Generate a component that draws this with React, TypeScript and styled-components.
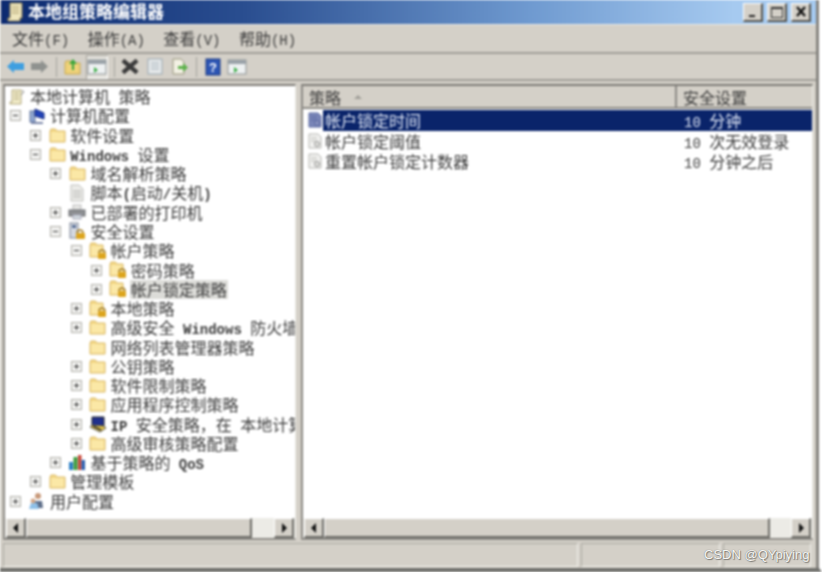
import React from 'react';
import styled, { createGlobalStyle } from 'styled-components';

const Global = createGlobalStyle`
  html, body { margin: 0; padding: 0; background: #fff; overflow: hidden; }
  #root { width: 822px; height: 572px; }
`;

const CJK = `"Noto Sans CJK SC", "Liberation Sans", sans-serif`;

const Page = styled.div`width: 822px; height: 572px; position: relative; overflow: hidden;`;
const Frame = styled.div`
  width: 822px; height: 572px; display: flex; flex-direction: column; box-sizing: border-box;
  background: #d4d0c8; border-right: 3px solid #fff; border-bottom: 4px solid #6f6f6b;
  font-family: ${CJK}; color: #3c3c3c; font-size: 16px; overflow: hidden;
  filter: blur(0.8px);
`;
const Inner = styled.div`
  flex: 1; min-height: 0; display: flex; flex-direction: column; border-right: 3px solid #85837e;
`;
const TitleBar = styled.div`
  height: 24px; flex: none; display: flex; align-items: center; padding: 0 5px;
  margin-left: 1px; gap: 4px;
  background: linear-gradient(90deg, #0c2a70 0%, #2a4e90 30%, #6f9ad0 65%, #a6caf0 90%);
`;
const TitleText = styled.div`
  flex: 1; color: #fff; font-size: 17px; font-weight: 700; line-height: 22px; padding-bottom: 2px;
`;
const WinButtons = styled.div`display: flex; gap: 4px;`;
const WinButton = styled.div`
  width: 20px; height: 19px; display: flex; align-items: center; justify-content: center;
  background: #d4d0c8; border-right: 2px solid #55544f; border-bottom: 2px solid #55544f;
  border-left: 1px solid #fff; border-top: 1px solid #fff; box-sizing: border-box;
`;
const MenuBar = styled.div`
  height: 30px; flex: none; display: flex; align-items: center; gap: 18.4px; padding: 2px 0 0 12px;
  box-sizing: border-box; border-bottom: 2px solid #a09e98; border-top: 1px solid #ecebe6;
`;
const MenuItem = styled.div`font-size: 16px; line-height: 24px; white-space: nowrap;`;
const Latin = styled.span<{ $light?: boolean }>`
  font-family: "Liberation Mono", monospace; font-size: 14px; white-space: pre;
  font-weight: ${p => (p.$light ? 400 : 700)};
`;
const ToolBar = styled.div`
  height: 27px; flex: none; display: flex; align-items: center; padding: 0 0 0 6px; box-sizing: border-box;
  border-bottom: 2px solid #a09e98;
`;
const ToolSlot = styled.div<{ $w: number; $ml?: number; $pressed?: boolean }>`
  width: ${p => p.$w}px; height: 24px; display: flex; align-items: center; justify-content: center; flex: none;
  margin-left: ${p => p.$ml ?? 0}px;
  background: ${p => (p.$pressed ? '#e4e2dc' : 'transparent')};
  box-shadow: ${p => (p.$pressed ? 'inset 1px 1px 0 #a5a39d, inset -1px -1px 0 #fff' : 'none')};
`;
const ToolSep = styled.div<{ $m: number }>`
  width: 1px; height: 20px; background: #a5a39d; margin: 0 ${p => p.$m}px; flex: none;
`;
const Panes = styled.div`
  flex: 1; min-height: 0; display: flex; gap: 5px; padding: 3px;
`;
const Pane = styled.div<{ $w: number }>`
  width: ${p => p.$w}px; flex: none; display: flex; flex-direction: column; box-sizing: border-box;
  background: #fff; border-top: 2px solid #7d7b76; border-left: 2px solid #8c8a85;
  border-right: 1px solid #ecebe6; border-bottom: 2px solid #8c8a85;
  overflow: hidden;
`;
const PaneBody = styled.div`flex: 1; min-height: 0; overflow: hidden; padding-top: 1px;`;
const TreeRow = styled.div<{ $level: number }>`
  height: 19.28px; display: flex; align-items: center; white-space: nowrap;
  padding-left: ${p => (p.$level < 0 ? 3 : 5 + p.$level * 20.2)}px;
`;
const Toggle = styled.div<{ $hidden?: boolean }>`
  width: 11px; height: 11px; flex: none; box-sizing: border-box; position: relative; margin-right: 7px;
  border: 1px solid ${p => (p.$hidden ? 'transparent' : '#b0aea8')}; background: ${p => (p.$hidden ? 'transparent' : '#f2f2f0')};
`;
const ToggleMark = styled.div<{ $plus?: boolean }>`
  position: absolute; left: 2px; top: 4px; width: 5px; height: 1px; background: #333;
  &::after {
    content: ''; display: ${p => (p.$plus ? 'block' : 'none')};
    position: absolute; left: 2px; top: -2px; width: 1px; height: 5px; background: #333;
  }
`;
const NodeIcon = styled.div`width: 18px; height: 18px; flex: none; display: flex; align-items: center; justify-content: center;`;
const NodeText = styled.div<{ $sel?: boolean }>`
  margin-left: 3px; padding: 0 1px; line-height: 19px; height: 19px; font-size: 16px;
  background: ${p => (p.$sel ? '#dcdcd8' : 'transparent')};
`;
const Scrollbar = styled.div`
  height: 20px; flex: none; display: flex; background: #ecebe6; padding: 0 1px;
`;
const ScrollBtn = styled.div`
  width: 20px; height: 20px; flex: none; box-sizing: border-box; display: flex; align-items: center; justify-content: center;
  background: #d4d0c8; border-right: 2px solid #6e6d68; border-bottom: 2px solid #6e6d68; border-top: 1px solid #fff; border-left: 1px solid #fff;
`;
const ScrollThumb = styled.div<{ $w: number }>`
  width: ${p => p.$w}px; flex: none; height: 20px; box-sizing: border-box; background: #d4d0c8;
  border-right: 2px solid #6e6d68; border-bottom: 2px solid #6e6d68; border-top: 1px solid #fff; border-left: 1px solid #fff;
`;
const ScrollGap = styled.div`flex: 1;`;
const HeaderRow = styled.div`
  height: 21px; flex: none; display: flex; background: #d4d0c8; border-bottom: 2px solid #8c8a85;
`;
const HeaderCell = styled.div<{ $w?: number }>`
  ${p => (p.$w ? `width: ${p.$w}px; flex: none; border-right: 2px solid #8c8a85;` : 'flex: 1;')}
  box-sizing: border-box; display: flex; align-items: center; gap: 13px; padding: 1px 0 0 6px; font-size: 16px; line-height: 20px;
`;
const SortMark = styled.div`
  width: 0; height: 0; border-left: 4px solid transparent; border-right: 4px solid transparent; border-bottom: 4px solid #a09e98;
`;
const DataRow = styled.div`height: 20.5px; display: flex; align-items: center; white-space: nowrap;`;
const NameCell = styled.div`width: 373px; flex: none; display: flex; align-items: center; padding-left: 4px; box-sizing: border-box; height: 100%;`;
const NameText = styled.div<{ $sel?: boolean }>`
  font-size: 16px; line-height: 20px; padding-left: 2px; height: 100%; flex: 1;
  ${p => (p.$sel ? 'background: #0a246a; color: #dfe6f5;' : '')}
`;
const ValueCell = styled.div<{ $sel?: boolean }>`
  flex: 1; height: 100%; padding-left: 8px; font-size: 16px; line-height: 20px;
  ${p => (p.$sel ? 'background: #0a246a; color: #dfe6f5;' : '')}
`;
const StatusBar = styled.div`
  flex: none; height: 24px; display: flex; gap: 3px; padding: 0 3px; margin-bottom: 1px;
`;
const StatusCell = styled.div<{ $w: number }>`
  width: ${p => p.$w}px; flex: none; box-sizing: border-box; border-top: 1px solid #aaa8a2; border-left: 1px solid #aaa8a2; border-right: 1px solid #f2f1ec; border-bottom: 1px solid #f2f1ec;
`;
const Watermark = styled.div`
  position: absolute; left: 704px; top: 545px; font-family: "Liberation Sans", sans-serif; font-size: 13px; line-height: 20px;
  color: #f6f6f4; text-shadow: 0 0 1px #6f6d67, 1px 1px 1px #7d7b76;
`;

const Folder = () => (
  <svg width="17" height="15" viewBox="0 0 17 15">
    <path d="M1 3 L1 14 L16 14 L16 3 L8 3 L6.5 1 L2 1 Z" fill="#f2d684" stroke="#dcbc6c" strokeWidth="1" />
    <rect x="2" y="4" width="13" height="9" fill="#fbe8a6" />
  </svg>
);
const LockFolder = () => (
  <svg width="18" height="18" viewBox="0 0 18 18">
    <path d="M1 3 L1 15 L14 15 L14 3 L8 3 L6.5 1 L2 1 Z" fill="#f2d684" stroke="#dcbc6c" />
    <rect x="2" y="4" width="11" height="10" fill="#fbe8a6" />
    <path d="M10 11 a3 3 0 0 1 6 0" fill="none" stroke="#a07a20" strokeWidth="1.4" />
    <rect x="9" y="11" width="8" height="6" rx="1" fill="#dca51e" />
  </svg>
);
const PolicyDoc = () => (
  <svg width="18" height="18" viewBox="0 0 18 18">
    <path d="M4 2 h9 v14 h-11 v-2 h2 Z" fill="#f3edc9" stroke="#b0a67c" />
    <path d="M6 5 h5 M6 8 h5 M6 11 h5" stroke="#aaa27c" />
    <path d="M14 2 l2 2 l-3 3" fill="none" stroke="#888" />
  </svg>
);
const Computer = () => (
  <svg width="18" height="18" viewBox="0 0 18 18">
    <rect x="2" y="4" width="5" height="11" fill="#8fa6cf" stroke="#66799e" />
    <path d="M7 2 L16 6 L16 12 L7 9 Z" fill="#2243b8" stroke="#1a2f80" />
    <path d="M3 16 h12" stroke="#7a86a8" strokeWidth="2" />
  </svg>
);
const Script = () => (
  <svg width="16" height="18" viewBox="0 0 16 18">
    <path d="M2 1 h8 l4 4 v12 h-12 Z" fill="#ecece9" stroke="#c0c0bc" />
    <path d="M4 7 h8 M4 10 h8 M4 13 h8" stroke="#aeaeaa" />
  </svg>
);
const Printer = () => (
  <svg width="18" height="16" viewBox="0 0 18 16">
    <rect x="5" y="1" width="8" height="5" fill="#e8e8e6" stroke="#bbb" />
    <rect x="1" y="6" width="16" height="6" fill="#8d8f92" stroke="#6d6f72" />
    <rect x="5" y="11" width="8" height="4" fill="#d3dbe0" stroke="#aab" />
  </svg>
);
const Security = () => (
  <svg width="18" height="18" viewBox="0 0 18 18">
    <rect x="2" y="1" width="8" height="15" fill="#d4d8e0" stroke="#7d8596" />
    <rect x="4" y="3" width="4" height="3" fill="#5a6f96" />
    <path d="M9 11 a3 3 0 0 1 6 0" fill="none" stroke="#a07a20" strokeWidth="1.4" />
    <rect x="8" y="11" width="9" height="6" rx="1" fill="#dca51e" />
  </svg>
);
const IpSec = () => (
  <svg width="18" height="18" viewBox="0 0 18 18">
    <path d="M3 2 h12 v9 h-12 Z" fill="#20308c" stroke="#222" />
    <path d="M1 12 L11 17 L17 13 L15 11 L3 10 Z" fill="#e6c64a" stroke="#555" />
    <path d="M4 11 L12 15" stroke="#2a2a2a" strokeWidth="1.5" />
  </svg>
);
const Qos = () => (
  <svg width="18" height="17" viewBox="0 0 18 17">
    <rect x="1" y="8" width="4" height="8" fill="#2b7fc4" />
    <rect x="5.5" y="3" width="4" height="13" fill="#3b9a3b" />
    <rect x="10" y="1" width="3.5" height="15" fill="#c9483a" />
    <rect x="13.5" y="6" width="3.5" height="10" fill="#2a5fb0" />
  </svg>
);
const Users = () => (
  <svg width="18" height="18" viewBox="0 0 18 18">
    <circle cx="10" cy="4" r="3" fill="#c79878" />
    <path d="M5 16 L6 9 h8 l1 7 Z" fill="#5d6d88" />
    <path d="M1 17 L3 11 h6 l2 6 Z" fill="#8ec0e8" />
    <circle cx="5" cy="9" r="2.4" fill="#d4a888" />
  </svg>
);
const PolicyItem = ({ active }: { active?: boolean }) => (
  <svg width="16" height="16" viewBox="0 0 16 16">
    <path d="M2 1 h9 l3 3 v11 h-12 Z" fill={active ? '#7a86b8' : '#f2f2f0'} stroke={active ? '#5a68a0' : '#b4b4b0'} />
    <path d="M4 5 h6 M4 8 h6" stroke={active ? '#5a68a0' : '#b8b8b4'} />
    <circle cx="10" cy="11" r="2.5" fill={active ? '#8a94c0' : '#e0e0dc'} stroke={active ? '#5a68a0' : '#999'} />
  </svg>
);
const Console = () => (
  <svg width="20" height="18" viewBox="0 0 20 18">
    <rect x="1" y="2" width="18" height="14" fill="#eef1f2" stroke="#8d9396" />
    <rect x="1" y="2" width="18" height="4" fill="#9aa2a8" />
    <path d="M7 9 l4 3 l-4 3 Z" fill="#3fae4a" />
  </svg>
);
const Arrow = ({ color, flip }: { color: string; flip?: boolean }) => (
  <svg width="19" height="15" viewBox="0 0 19 15" style={flip ? { transform: 'scaleX(-1)' } : undefined}>
    <path d="M1 7.5 L8 1 V4 H18 V11 H8 V14 Z" fill={color} />
  </svg>
);

type Node = { level: number; toggle?: 'plus' | 'minus'; icon: React.ReactNode; text: React.ReactNode; sel?: boolean };

const F = <Folder />;
const L = <LockFolder />;

const nodes: Node[] = [
  { level: -1, icon: <PolicyDoc />, text: <>本地计算机<Latin> </Latin>策略</> },
  { level: 0, toggle: 'minus', icon: <Computer />, text: '计算机配置' },
  { level: 1, toggle: 'plus', icon: F, text: '软件设置' },
  { level: 1, toggle: 'minus', icon: F, text: <><Latin>Windows </Latin>设置</> },
  { level: 2, toggle: 'plus', icon: F, text: '域名解析策略' },
  { level: 2, icon: <Script />, text: <>脚本<Latin>(</Latin>启动<Latin>/</Latin>关机<Latin>)</Latin></> },
  { level: 2, toggle: 'plus', icon: <Printer />, text: '已部署的打印机' },
  { level: 2, toggle: 'minus', icon: <Security />, text: '安全设置' },
  { level: 3, toggle: 'minus', icon: L, text: '帐户策略' },
  { level: 4, toggle: 'plus', icon: L, text: '密码策略' },
  { level: 4, toggle: 'plus', icon: L, text: '帐户锁定策略', sel: true },
  { level: 3, toggle: 'plus', icon: L, text: '本地策略' },
  { level: 3, toggle: 'plus', icon: F, text: <>高级安全<Latin> Windows </Latin>防火墙</> },
  { level: 3, icon: F, text: '网络列表管理器策略' },
  { level: 3, toggle: 'plus', icon: F, text: '公钥策略' },
  { level: 3, toggle: 'plus', icon: F, text: '软件限制策略' },
  { level: 3, toggle: 'plus', icon: F, text: '应用程序控制策略' },
  { level: 3, toggle: 'plus', icon: <IpSec />, text: <><Latin>IP </Latin>安全策略{'\uFF0C'}在<Latin> </Latin>本地计算机</> },
  { level: 3, toggle: 'plus', icon: F, text: '高级审核策略配置' },
  { level: 2, toggle: 'plus', icon: <Qos />, text: <>基于策略的<Latin> QoS</Latin></> },
  { level: 1, toggle: 'plus', icon: F, text: '管理模板' },
  { level: 0, toggle: 'plus', icon: <Users />, text: '用户配置' },
];

const rows = [
  { name: '帐户锁定时间', num: '10 ', unit: '分钟', sel: true },
  { name: '帐户锁定阈值', num: '10 ', unit: '次无效登录' },
  { name: '重置帐户锁定计数器', num: '10 ', unit: '分钟之后' },
];

const menus = [['文件', 'F'], ['操作', 'A'], ['查看', 'V'], ['帮助', 'H']];

const Left = () => (
  <svg width="8" height="10" viewBox="0 0 8 10"><path d="M6 0 V10 L1 5 Z" fill="#111" /></svg>
);
const Right = () => (
  <svg width="8" height="10" viewBox="0 0 8 10"><path d="M2 0 V10 L7 5 Z" fill="#111" /></svg>
);

const Bar = ({ thumb }: { thumb: number }) => (
  <Scrollbar>
    <ScrollBtn><Left /></ScrollBtn>
    <ScrollThumb $w={thumb} />
    <ScrollGap />
    <ScrollBtn><Right /></ScrollBtn>
  </Scrollbar>
);

export default function App() {
  return (
    <Page>
      <Global />
      <Frame>
        <Inner>
          <TitleBar>
            <svg width="18" height="20" viewBox="0 0 18 20">
              <path d="M4 1 h12 v15 h-2 v3 h-12 v-3 h2 Z" fill="#efe6bd" stroke="#8c7f55" />
              <path d="M6 5 h7 M6 8 h7 M6 11 h7" stroke="#a99b6a" />
            </svg>
            <TitleText>本地组策略编辑器</TitleText>
            <WinButtons>
              <WinButton><svg width="10" height="10"><rect x="1" y="8" width="6" height="2" fill="#222" /></svg></WinButton>
              <WinButton><svg width="12" height="12"><rect x="0.5" y="1.5" width="11" height="10" fill="none" stroke="#333" /><rect x="0" y="1" width="12" height="2" fill="#333" /></svg></WinButton>
              <WinButton><svg width="12" height="11"><path d="M2 1 L10 10 M10 1 L2 10" stroke="#111" strokeWidth="2.4" /></svg></WinButton>
            </WinButtons>
          </TitleBar>
          <MenuBar>
            {menus.map(([t, k]) => (
              <MenuItem key={k}>{t}<Latin $light>({k})</Latin></MenuItem>
            ))}
          </MenuBar>
          <ToolBar>
            <ToolSlot $w={19}><Arrow color="#3f9fe0" /></ToolSlot>
            <ToolSlot $w={29}><Arrow color="#8f928f" flip /></ToolSlot>
            <ToolSep $m={2} />
            <ToolSlot $w={20} $ml={4}>
              <svg width="18" height="17" viewBox="0 0 18 17">
                <path d="M1 5 V16 H16 V5 H8 L7 3 H2 Z" fill="#efd27a" stroke="#c8a850" />
                <path d="M8 12 V6 H5 L9 1 L13 6 H10 V12 Z" fill="#3aa53a" />
              </svg>
            </ToolSlot>
            <ToolSlot $w={22} $ml={3} $pressed><Console /></ToolSlot>
            <ToolSep $m={6} />
            <ToolSlot $w={18}>
              <svg width="19" height="17" viewBox="0 0 19 17">
                <path d="M2 2 L17 15 M17 2 L2 15" stroke="#3a3a3a" strokeWidth="4.5" />
              </svg>
            </ToolSlot>
            <ToolSlot $w={32}>
              <svg width="16" height="17" viewBox="0 0 16 17">
                <rect x="1" y="1" width="14" height="15" fill="#e6e9ea" stroke="#9aa8b2" />
                <path d="M4 5 h8 M4 8 h8 M4 11 h8" stroke="#a2b0ba" />
              </svg>
            </ToolSlot>
            <ToolSlot $w={18}>
              <svg width="18" height="17" viewBox="0 0 18 17">
                <path d="M2 1 h8 l3 3 v12 h-11 Z" fill="#f3f1e4" stroke="#9a977f" />
                <path d="M7 8 h5 v-3 l5 4.5 l-5 4.5 v-3 h-5 Z" fill="#5cb04a" />
              </svg>
            </ToolSlot>
            <ToolSep $m={7} />
            <ToolSlot $w={17}>
              <svg width="16" height="18" viewBox="0 0 16 18">
                <rect x="1" y="1" width="14" height="16" fill="#2c55b4" stroke="#1c3a80" />
                <text x="8" y="14" textAnchor="middle" fill="#fff" fontSize="13" fontWeight="700" fontFamily="Liberation Sans">?</text>
              </svg>
            </ToolSlot>
            <ToolSlot $w={32}><Console /></ToolSlot>
          </ToolBar>
          <Panes>
            <Pane $w={293}>
              <PaneBody>
                {nodes.map((n, i) => (
                  <TreeRow key={i} $level={n.level}>
                    {n.level >= 0 && (
                      <Toggle $hidden={!n.toggle}>
                        {n.toggle && <ToggleMark $plus={n.toggle === 'plus'} />}
                      </Toggle>
                    )}
                    <NodeIcon>{n.icon}</NodeIcon>
                    <NodeText $sel={n.sel}>{n.text}</NodeText>
                  </TreeRow>
                ))}
              </PaneBody>
              <Bar thumb={226} />
            </Pane>
            <Pane $w={512}>
              <HeaderRow>
                <HeaderCell $w={374}>策略<SortMark /></HeaderCell>
                <HeaderCell>安全设置</HeaderCell>
              </HeaderRow>
              <PaneBody>
                {rows.map(r => (
                  <DataRow key={r.name}>
                    <NameCell>
                      <PolicyItem active={r.sel} />
                      <NameText $sel={r.sel}>{r.name}</NameText>
                    </NameCell>
                    <ValueCell $sel={r.sel}><Latin $light>{r.num}</Latin>{r.unit}</ValueCell>
                  </DataRow>
                ))}
              </PaneBody>
              <Bar thumb={446} />
            </Pane>
          </Panes>
          <StatusBar>
            <StatusCell $w={575} />
            <StatusCell $w={139} />
            <StatusCell $w={88} />
          </StatusBar>
        </Inner>
      </Frame>
      <Watermark>CSDN @QYpiying</Watermark>
    </Page>
  );
}
